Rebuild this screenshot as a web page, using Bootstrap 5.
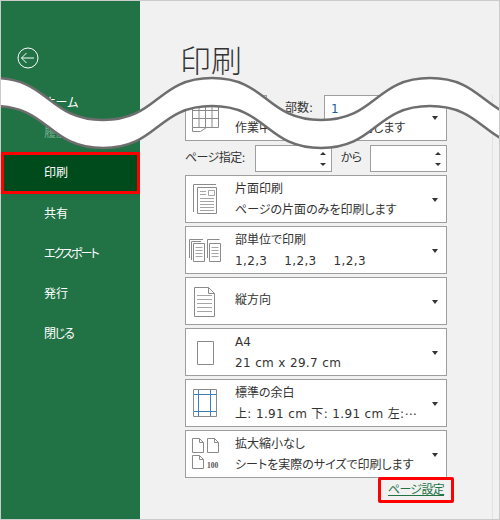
<!doctype html>
<html lang="ja">
<head>
<meta charset="utf-8">
<title>印刷</title>
<link href="https://cdn.jsdelivr.net/npm/bootstrap@5.3.0/dist/css/bootstrap.min.css" rel="stylesheet">
<style>
html,body{margin:0;padding:0;width:500px;height:520px;overflow:hidden;background:#f1f1f1}
body{font-family:"DejaVu Sans","Noto Sans CJK JP",sans-serif;font-size:12px;line-height:1.2;color:#333;font-feature-settings:"palt"}
.frame{width:500px;height:520px;border:1px solid #cbcbcb;background:#f1f1f1;position:relative;overflow:hidden}
.side{width:139px;background:#217346;color:#fff;flex:none;padding-top:45px}
.back-ico{display:block;margin:0 0 13px 14.5px;width:24px;height:24px}
.side .nav-link{color:#fff;padding:0 0 0 43px;height:40px;font-size:12px;display:flex;align-items:center}
.side .nav-link.dim{color:#74aa8c;height:20px;margin-bottom:9px}
.side .nav-link.on{height:42px;background:#004b1c;border:3px solid #f00;padding:1px 0 0 40px}
.side .nav-link.narrow{letter-spacing:-1.9px}
.side .nav-link.slim{letter-spacing:-1.2px}
.sheet{width:353px;height:100%;border-right:1px solid #e2e2e2;position:relative;padding:92px 0 0 45px}
.upper{position:absolute;top:0;left:0;width:353px;height:132px;background:#f1f1f1;clip-path:path("M-37 119 C18 119 17 77 72 77 C127 77 126 119 181 119 C236 119 235 77 290 77 C345 77 344 119 399 119 L399 -1 L-37 -1 Z")}
.ttl{font-size:31px;line-height:36px;font-weight:300;color:#333;margin:0;padding:40px 0 0 40px;height:94px;font-family:"Noto Sans CJK JP",sans-serif}
.copy-row{height:38px;border-right:1px solid #e2e2e2;padding-left:45px}
.print-btn{width:82px;height:60px;border:1px solid #9e9e9e;background:#f1f1f1;flex:none}
.copy-lbl{margin:0 11px 0 18px;padding-top:6px;font-size:12px}
.copy-val{width:100px;height:30px;border:1px solid #9e9e9e;background:#fff;color:#1a5ea0;padding:6px 6px;flex:none}
.stack{width:262px;gap:3px}
.opt{height:48px;border:1px solid #9e9e9e;border-radius:0;background:#fff;color:#333;flex-direction:row;align-items:center;padding:0 8px 0 0}
.opt svg.ico{width:36px;height:36px;flex:none;margin-right:13px}
.opt-txt{flex:1 1 auto;min-width:0;gap:7px;font-size:12px;line-height:14px;padding-top:1px}
.opt-txt.one{padding-top:0;padding-bottom:2px}
.tri{width:0;height:0;border-left:3.5px solid transparent;border-right:3.5px solid transparent;border-top:4px solid #333;flex:none;margin:1px 0 0 4px}
.triup{width:0;height:0;border-left:3px solid transparent;border-right:3px solid transparent;border-bottom:3px solid #333}
.tridn{width:0;height:0;border-left:3px solid transparent;border-right:3px solid transparent;border-top:3px solid #333}
.range{height:27px;margin-top:1px}
.range-lbl{width:70px;font-size:12px;flex:none;letter-spacing:-.6px}
.spin{width:77px;height:27px;border:1px solid #9e9e9e;background:#fff;padding:6px 5px 5px 0;flex:none}
.kara{width:38px;text-align:center;font-size:12px;flex:none;letter-spacing:-.8px}
.wide{letter-spacing:.35px}
.nums{gap:17px;letter-spacing:.35px}
.link-wrap{margin:-1px -7px 0 0;position:relative}
.setup{display:block;border:3px solid #f00;border-radius:2px;padding:2px 7px;color:#217346;font-size:12px;line-height:16px;text-decoration:underline;letter-spacing:-.7px}
.wave{position:absolute;left:-1px;top:-1px;width:500px;height:520px;pointer-events:none}
</style>
</head>
<body>
<div class="frame d-flex">
  <aside class="side">
    <svg class="back-ico" viewBox="0 0 24 24" fill="none" stroke="#fff" stroke-width="1"><circle cx="12" cy="12" r="10"/><path d="M5.500 12H18M10.500 7l-5 5 5 5"/></svg>
    <nav class="nav flex-column">
      <a class="nav-link" href="#">ホーム</a>
      <a class="nav-link dim" href="#">履歴</a>
      <a class="nav-link on" href="#">印刷</a>
      <a class="nav-link" href="#">共有</a>
      <a class="nav-link narrow" href="#">エクスポート</a>
      <a class="nav-link" href="#">発行</a>
      <a class="nav-link slim" href="#">閉じる</a>
    </nav>
  </aside>
  <main class="sheet">
    <div class="d-flex flex-column stack">
      <div class="card opt">
        <svg class="ico" viewBox="0 0 36 36" fill="none" stroke="#8a8a8a"><path d="M6.500 3.500h26v25h-26zM13 3.500v25M19.500 3.500v25M26 3.500v25M6.500 11.500h26M6.500 19.500h26M6.500 28.500v4h8l6-4"/></svg>
        <div class="opt-txt d-flex flex-column"><span>&nbsp;</span><span>作業中のシートのみを印刷します</span></div>
        <span class="tri"></span>
      </div>
      <div class="range d-flex align-items-center">
        <span class="range-lbl">ページ指定:</span>
        <div class="spin d-flex flex-column align-items-end justify-content-between"><span class="triup"></span><span class="tridn"></span></div>
        <span class="kara">から</span>
        <div class="spin d-flex flex-column align-items-end justify-content-between"><span class="triup"></span><span class="tridn"></span></div>
      </div>
      <div class="card opt">
        <svg class="ico" viewBox="0 0 36 36" fill="none" stroke="#8a8a8a"><path d="M7.500 31V3.500H30"/><path d="M11.500 6.500h19v26h-19z"/><path stroke="#a5a5a5" d="M14 10.500h6M14 13.500h6M22.500 9.500h6v5h-6zM14 17.500h14M14 20.500h14M14 23.500h14M14 26.500h14M14 29.500h14"/></svg>
        <div class="opt-txt d-flex flex-column"><span>片面印刷</span><span>ページの片面のみを印刷します</span></div>
        <span class="tri"></span>
      </div>
      <div class="card opt">
        <svg class="ico" viewBox="0 0 36 36" fill="none" stroke="#8a8a8a"><path d="M3.500 26V7.500H17M5.500 28V9.500H15"/><path d="M7.500 11.500h11v18h-11z"/><path stroke="#a5a5a5" d="M9.500 15.500h7M9.500 18.500h7M9.500 21.500h7M9.500 24.500h7"/><path d="M21.500 26V7.500h12"/><path d="M23.500 11.500h11v18h-11z"/><path stroke="#a5a5a5" d="M25.500 15.500h7M25.500 18.500h7M25.500 21.500h7M25.500 24.500h7"/></svg>
        <div class="opt-txt d-flex flex-column"><span>部単位で印刷</span><span class="nums d-flex"><span>1,2,3</span><span>1,2,3</span><span>1,2,3</span></span></div>
        <span class="tri"></span>
      </div>
      <div class="card opt">
        <svg class="ico" viewBox="0 0 36 36" fill="none" stroke="#8a8a8a"><path d="M8.500 4.500h14l6 6v23h-20zM22.500 4.500v6h6"/><path stroke="#a5a5a5" d="M11 12.500h15M11 16.500h15M11 20.500h15M11 24.500h15M11 28.500h15"/></svg>
        <div class="opt-txt one d-flex flex-column"><span>縦方向</span></div>
        <span class="tri"></span>
      </div>
      <div class="card opt">
        <svg class="ico" viewBox="0 0 36 36" fill="none" stroke="#8a8a8a"><path d="M11.500 7.500h16v23h-16z"/></svg>
        <div class="opt-txt d-flex flex-column"><span>A4</span><span class="wide">21 cm x 29.7 cm</span></div>
        <span class="tri"></span>
      </div>
      <div class="card opt">
        <svg class="ico" viewBox="0 0 36 36" fill="none" stroke="#8a8a8a"><path stroke="#3f7fb8" d="M12.500 4v27M24.500 4v27M7 9.500h23M7 26.500h23"/><path d="M7.500 4.500h23v27h-23z"/></svg>
        <div class="opt-txt d-flex flex-column"><span>標準の余白</span><span class="wide">上: 1.91 cm 下: 1.91 cm 左:⋯</span></div>
        <span class="tri"></span>
      </div>
      <div class="card opt">
        <svg class="ico" viewBox="0 0 36 36" fill="none" stroke="#8a8a8a"><path d="M6.500 2.500h7l4 4v10h-11zM13.500 2.500v4h4M21.500 2.500h7l4 4v10h-11zM28.500 2.500v4h4M6.500 19.500h7l4 4v9h-11zM13.500 19.500v4h4"/><text x="21" y="32" fill="#555" stroke="none" font-family="Liberation Serif" font-size="7.500" font-weight="700">100</text></svg>
        <div class="opt-txt d-flex flex-column"><span>拡大縮小なし</span><span>シートを実際のサイズで印刷します</span></div>
        <span class="tri"></span>
      </div>
    </div>
    <div class="d-flex justify-content-end stack">
      <div class="link-wrap"><a class="setup" href="#">ページ設定</a></div>
    </div>
    <div class="upper">
      <h1 class="ttl">印刷</h1>
      <div class="copy-row d-flex align-items-start">
        <div class="print-btn"></div>
        <span class="copy-lbl">部数:</span>
        <div class="copy-val">1</div>
      </div>
    </div>
  </main>
  <svg class="wave" viewBox="0 0 500 520">
    <path fill="#fff" d="M-6 78 C49 78 48 120 103 120 C158 120 157 78 212 78 C267 78 266 120 321 120 C376 120 375 78 430 78 C485 78 484 120 539 120 L539 148 C484 148 485 106 430 106 C375 106 376 148 321 148 C266 148 267 106 212 106 C157 106 158 148 103 148 C48 148 49 106 -6 106 Z"/>
    <path fill="none" stroke="#6e6e6e" stroke-width="2.500" d="M-6 78 C49 78 48 120 103 120 C158 120 157 78 212 78 C267 78 266 120 321 120 C376 120 375 78 430 78 C485 78 484 120 539 120"/>
    <path fill="none" stroke="#6e6e6e" stroke-width="2.500" d="M-6 106 C49 106 48 148 103 148 C158 148 157 106 212 106 C267 106 266 148 321 148 C376 148 375 106 430 106 C485 106 484 148 539 148"/>
  </svg>
</div>
<script src="https://cdn.jsdelivr.net/npm/bootstrap@5.3.0/dist/js/bootstrap.bundle.min.js"></script>
</body>
</html>
